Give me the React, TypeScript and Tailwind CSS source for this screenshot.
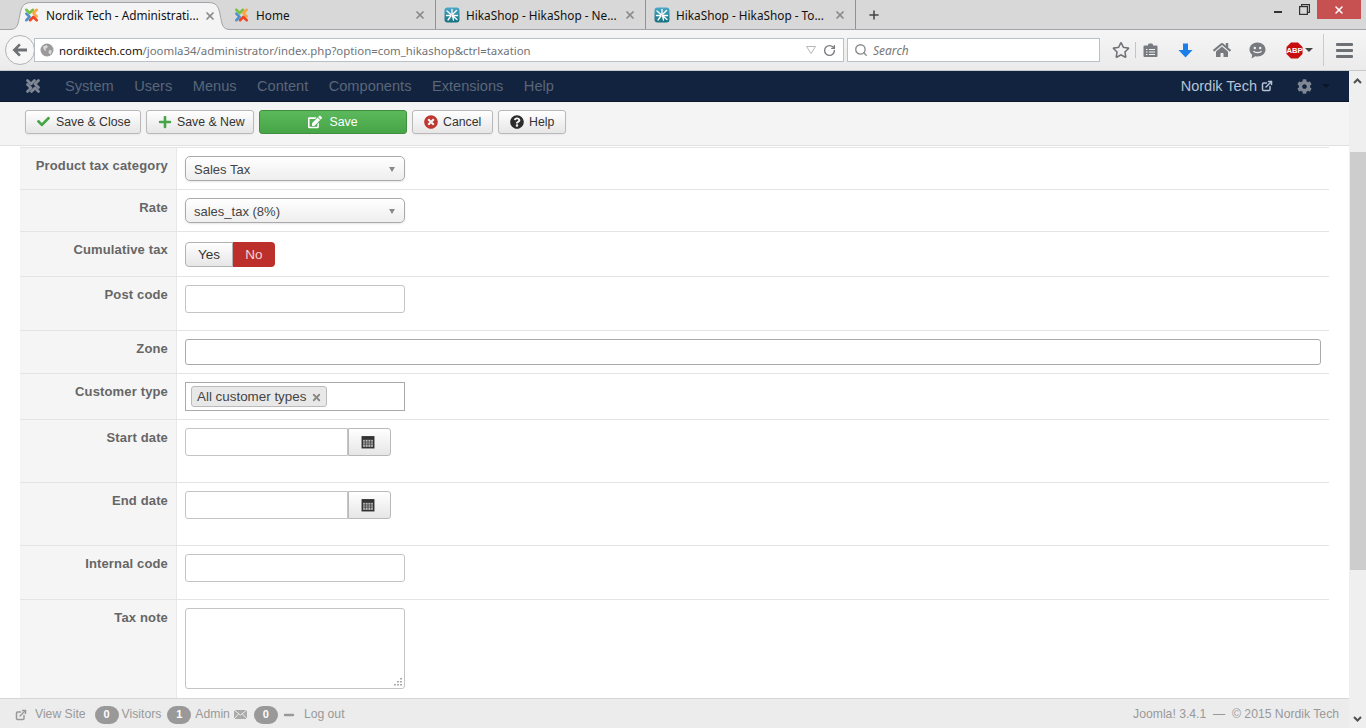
import React from 'react';
import { X, RotateCw, Search, Minus, ExternalLink, Plus } from 'lucide-react';
import { FaCheck, FaPlus, FaTimesCircle, FaQuestionCircle, FaCog, FaHome, FaRegStar, FaEdit } from 'react-icons/fa';

const sans = 'font-["Liberation_Sans",Arial,sans-serif]';

const JoomlaIcon = ({ mono }: { mono?: boolean }) => {
    const c = (color: string) => (mono ? '#7f8794' : color);
    return (
        <svg width="18" height="18" viewBox="0 0 18 18" fill="none" strokeWidth="2.8" strokeLinecap="round" strokeLinejoin="round">
            <path d="M3.500 3.500 7 7l3.500-3.500" stroke={c('#7ac143')} />
            <path d="M14.500 3.500 11 7l3.500 3.500" stroke={c('#f9a541')} />
            <path d="M14.500 14.500 11 11l-3.500 3.500" stroke={c('#f44321')} />
            <path d="M3.500 14.500 7 11 3.500 7.500" stroke={c('#5091cd')} />
        </svg>
    );
};

const HikaIcon = () => (
    <svg width="16" height="16" viewBox="0 0 16 16" className="shrink-0">
        <defs>
            <linearGradient id="hika" x1="0" y1="0" x2="0" y2="1">
                <stop offset="0" stopColor="#4aa8c8" />
                <stop offset="1" stopColor="#14707f" />
            </linearGradient>
        </defs>
        <rect x="0.5" y="0.5" width="15" height="15" rx="3" fill="url(#hika)" />
        <path d="M8 2.500V7M3 4l4 3.500M2.500 8.500H7M8.500 8.500l1 4.500M7 9l-3 4M9 7l3.500-3.500M9.500 8.500h4M9.500 9.500l3.500 3" stroke="#fff" strokeWidth="1.3" strokeLinecap="round" />
    </svg>
);

const tabs = [
    { title: 'Nordik Tech - Administrati...', active: true, icon: 'joomla' },
    { title: 'Home', active: false, icon: 'joomla' },
    { title: 'HikaShop - HikaShop - Ne...', active: false, icon: 'hika' },
    { title: 'HikaShop - HikaShop - To...', active: false, icon: 'hika' },
];

const BrowserTabs = () => (
    <div className="h-[30px] bg-[#d8d8d8] border-b border-[#a0a3a7] flex items-stretch pl-[15px] font-['Noto_Sans',sans-serif] text-[11.8px] text-[#111]">
        {tabs.map((t) => (
            <div
                key={t.title}
                className={
                    t.active
                        ? 'relative w-[211px] h-[30px] flex items-center pl-[8px] pr-[10px] gap-[6px]'
                        : 'w-[210px] h-[29px] border-r border-[#8f9295] flex items-center pl-[7px] pr-[9px] gap-[6px]'
                }
            >
                {t.active && (
                    <svg width="220" height="30" viewBox="0 0 220 30" className="absolute left-[-5px] top-0">
                        <path d="M0 30V29.500C8 29.500 8 24 10 14 11.500 6 14 2.500 22 2.500H198C206 2.500 208.500 6 210 14 212 24 212 29.500 220 29.500V30Z" fill="#f4f4f4" />
                        <path d="M0 29.500C8 29.500 8 24 10 14 11.500 6 14 2.500 22 2.500H198C206 2.500 208.500 6 210 14 212 24 212 29.500 220 29.500" fill="none" stroke="#a0a3a7" />
                    </svg>
                )}
                <span className="relative w-[17px] flex justify-center shrink-0">{t.icon === 'joomla' ? <JoomlaIcon /> : <HikaIcon />}</span>
                <span className="relative flex-1 whitespace-nowrap overflow-hidden pt-[2px]">{t.title}</span>
                <X size={12} strokeWidth={3.5} className="relative mt-[1px] text-[#8a8a8a] shrink-0" />
            </div>
        ))}
        <div className="w-[36px] flex items-center justify-center">
            <Plus size={14} strokeWidth={2.6} className="text-[#444]" />
        </div>
        <div className="flex-1" />
        <div className="flex items-start">
            <div className="w-[26px] h-[20px] flex items-center justify-center pt-[4px]">
                <div className="w-[8px] h-[2px] bg-[#333]" />
            </div>
            <div className="w-[26px] h-[19px] flex items-center justify-center">
                <svg width="11" height="11" viewBox="0 0 11 11" fill="none" stroke="#333" strokeWidth="1.2">
                    <rect x="0.6" y="2.6" width="7.8" height="7.8" />
                    <path d="M2.6 2.6V0.6h7.8v7.8H8.4" />
                </svg>
            </div>
            <div className="w-[44px] h-[19px] mr-[5px] bg-[#c75050] flex items-center justify-center">
                <X size={12} strokeWidth={3} className="text-white" />
            </div>
        </div>
    </div>
);

const BrowserNav = () => (
    <div className="h-[41px] bg-gradient-to-b from-[#f5f5f5] to-[#ebebeb] border-b border-[#c9c9c9] flex items-center pl-[5px] font-['Noto_Sans',sans-serif] text-[11.4px]">
        <div className="w-[30px] h-[30px] rounded-full border border-[#b0b3b6] bg-[#f7f7f7] flex items-center justify-center z-10 shrink-0">
            <svg width="16" height="14" viewBox="0 0 16 14" fill="#6d7074">
                <path d="M7 0.5 8.8 2.3 5.6 5.4H15v3.2H5.6l3.200 3.100L7 13.500 0.500 7z" />
            </svg>
        </div>
        <div className="w-[810px] h-[24px] -ml-[1px] bg-white border border-[#b9c0c8] flex items-center pl-[5px] pr-[6px] text-[#6f7378]">
            <svg width="14" height="14" viewBox="0 0 14 14" className="shrink-0 mr-[5px]">
                <circle cx="7" cy="7" r="6.500" fill="#9b9b9b" />
                <path d="M3 3.500 6.500 2 8 4 5.500 6 6 8 4 7zM9 7l3 .5-1.500 4L8.500 10z" fill="#d9d9d9" />
            </svg>
            <span className="whitespace-nowrap pt-[1px]">
                <span className="text-[#111]">nordiktech.com</span>/joomla34/administrator/index.php?option=com_hikashop&amp;ctrl=taxation
            </span>
            <div className="flex-1" />
            <svg width="10" height="8" viewBox="0 0 10 8" className="mr-[7px]">
                <path d="M0.500 0.500h9L5 7.500z" fill="none" stroke="#b4b8bc" />
            </svg>
            <RotateCw size={13} strokeWidth={2.5} className="text-[#777b80] mr-[1px]" />
        </div>
        <div className="w-[253px] h-[24px] ml-[3px] bg-white border border-[#b9c0c8] flex items-center pl-[6px] text-[#777] italic text-[12px]">
            <Search size={14} strokeWidth={2.4} className="text-[#8a8d90] mr-[5px]" />
            <span className="pt-[1px]">Search</span>
        </div>
        <FaRegStar size={18} className="ml-[12px] text-[#6d7074] shrink-0" />
        <div className="w-px h-[16px] bg-[#c2c5c8] ml-[5px]" />
        <svg width="15" height="15" viewBox="0 0 15 15" className="ml-[7px] shrink-0" fill="#777b80">
            <path d="M1.500 2.500H5V1.500L6 0.500h3l1 1v1h3.500a1 1 0 0 1 1 1v9.500a1 1 0 0 1-1 1h-12a1 1 0 0 1-1-1V3.500a1 1 0 0 1 1-1z" />
            <path d="M3 6h1.500v1H3zM6 6h6v1H6zM3 8.500h1.500v1H3zM6 8.500h6v1H6zM3 11h1.500v1H3zM6 11h6v1H6z" fill="#f2f2f2" />
        </svg>
        <svg width="15" height="15" viewBox="0 0 15 15" className="ml-[20px] shrink-0" fill="#1a7fe8">
            <path d="M5 0.500h5V7h4.500l-7 7.500-7-7.500H5z" />
        </svg>
        <FaHome size={18} className="ml-[20px] text-[#777b80] shrink-0" />
        <svg width="17" height="17" viewBox="0 0 17 17" className="ml-[18px] shrink-0">
            <path d="M8.500 0.500c4.500 0 8 3 8 7s-3.500 7-8 7c-.8 0-1.500-.1-2.200-.3L2.500 16.500l.7-3.700C1.500 11.500.5 9.600.5 7.500c0-4 3.500-7 8-7z" fill="#777b80" />
            <circle cx="5.800" cy="6" r="1.200" fill="#f2f2f2" />
            <circle cx="11.200" cy="6" r="1.200" fill="#f2f2f2" />
            <path d="M4.500 9c1 2.200 7 2.200 8 0" fill="none" stroke="#f2f2f2" strokeWidth="1.200" />
        </svg>
        <svg width="17" height="17" viewBox="0 0 17 17" className="ml-[20px] shrink-0">
            <path d="M5 0.500h7L16.500 5v7L12 16.500H5L0.500 12V5z" fill="#c70d0d" />
            <text x="8.500" y="11.200" textAnchor="middle" fontSize="7.600" fontWeight="700" fill="#fff" fontFamily="Liberation Sans">ABP</text>
        </svg>
        <div className="ml-[2px] w-0 h-0 border-x-[4px] border-x-transparent border-t-[4px] border-t-[#444]" />
        <div className="w-px h-[32px] bg-[#c9cbcd] ml-[10px]" />
        <div className="ml-[12px] flex flex-col gap-[3px]">
            <div className="w-[17px] h-[3px] rounded-[1px] bg-[#6d7074]" />
            <div className="w-[17px] h-[3px] rounded-[1px] bg-[#6d7074]" />
            <div className="w-[17px] h-[3px] rounded-[1px] bg-[#6d7074]" />
        </div>
    </div>
);

const TopNav = () => (
    <div className={`h-[31px] shrink-0 bg-[#12233f] border-b border-[#0b1729] flex items-center pl-[24px] pr-[19px] text-[14.6px] text-[#5b6678] ${sans}`}>
        <JoomlaIcon mono />
        <div className="flex items-center gap-[20.5px] ml-[23px] pt-[1px]">
            {['System', 'Users', 'Menus', 'Content', 'Components', 'Extensions', 'Help'].map((m) => (
                <span key={m}>{m}</span>
            ))}
        </div>
        <div className="flex-1" />
        <span className="text-[14.5px] text-[#b5c3d4] pt-[1px]">Nordik Tech</span>
        <ExternalLink size={12} strokeWidth={3} className="ml-[4px] text-[#b5c3d4]" />
        <FaCog size={15} className="ml-[24px] text-[#7f8794]" />
        <div className="ml-[10px] w-0 h-0 border-x-[4px] border-x-transparent border-t-[4px] border-t-[#0a1526]" />
    </div>
);

const toolBtn = 'h-[24px] rounded-[3px] border border-[#b9b9b9] bg-gradient-to-b from-white to-[#e6e6e6] flex items-center text-[12.3px] text-[#333] shadow-[0_1px_2px_rgba(0,0,0,0.05)]';

const Toolbar = () => (
    <div className={`h-[44px] bg-[#f4f4f4] border-b border-[#e1e1e1] shrink-0 flex items-center pl-[25px] gap-[5px] pb-[4px] ${sans}`}>
        <button className={`${toolBtn} w-[116px] pl-[11px] gap-[6px]`}>
            <FaCheck size={13} className="text-[#46a546]" />
            <span className="pt-[1px]">Save &amp; Close</span>
        </button>
        <button className={`${toolBtn} w-[108px] pl-[11px] gap-[5px]`}>
            <FaPlus size={14} className="text-[#46a546]" />
            <span className="pt-[1px]">Save &amp; New</span>
        </button>
        <button className="h-[24px] w-[148px] rounded-[3px] border border-[#3f8f3f] bg-gradient-to-b from-[#5cb85c] to-[#46a546] flex items-center justify-center gap-[7px] text-[12.3px] text-white">
            <FaEdit size={14} />
            <span className="pt-[1px]">Save</span>
        </button>
        <button className={`${toolBtn} w-[81px] pl-[11px] gap-[5px]`}>
            <FaTimesCircle size={14} className="text-[#bd362f]" />
            <span className="pt-[1px]">Cancel</span>
        </button>
        <button className={`${toolBtn} w-[68px] pl-[11px] gap-[5px]`}>
            <FaQuestionCircle size={14} className="text-[#2b2b2b]" />
            <span className="pt-[1px]">Help</span>
        </button>
    </div>
);

const Row = ({ label, h, children }: { label: string; h: string; children: React.ReactNode }) => (
    <div className={`flex border-b border-[#e4e4e4] ${h}`}>
        <div className="w-[157px] shrink-0 bg-[#f5f5f5] border-r border-[#e8e8e8] pt-[9px] pr-[8px] text-right font-bold text-[#666] text-[13px] tracking-[0.15px] leading-[18px]">{label}</div>
        <div className="flex-1 pt-[8px] pl-[8px] pr-[8px]">{children}</div>
    </div>
);

const Select = ({ value }: { value: string }) => (
    <div className="w-[220px] h-[25px] rounded-[5px] border border-[#aaa] bg-gradient-to-b from-white to-[#eeeeee] shadow-[0_1px_2px_rgba(0,0,0,0.1)] flex items-center justify-between pl-[8px] pr-[9px] text-[#444] text-[13px] pt-[2px]">
        {value}
        <div className="w-0 h-0 border-x-[3.500px] border-x-transparent border-t-[5px] border-t-[#888]" />
    </div>
);

const TextInput = ({ cls }: { cls: string }) => <div className={`h-[28px] rounded-[3px] border border-[#c4c4c4] bg-white ${cls}`} />;

const CalIcon = () => (
    <svg width="14" height="14" viewBox="0 0 13 13">
        <path d="M0.500 1h12V12.500H0.500z" fill="#333" />
        <path d="M2 4.500h9v6.500H2z" fill="#bdbdbd" />
        <path d="M2 6.500h9M2 8.500h9M4 4.500V11M6.500 4.500V11M9 4.500V11" stroke="#444" strokeWidth="0.800" />
    </svg>
);

const DateInput = () => (
    <div className="flex w-[206px] h-[28px]">
        <div className="w-[164px] rounded-l-[3px] border border-[#c4c4c4] bg-white" />
        <div className="w-[43px] rounded-r-[3px] border border-[#b9b9b9] bg-gradient-to-b from-white to-[#e6e6e6] flex items-center justify-center pr-[3px]">
            <CalIcon />
        </div>
    </div>
);

const FormTable = () => (
    <div className="flex-1 min-h-0 overflow-hidden pl-[20px] pr-[20px] bg-white">
        <div className="border-t border-[#e4e4e4] mt-[1px]" />
        <Row label="Product tax category" h="h-[42px]">
            <Select value="Sales Tax" />
        </Row>
        <Row label="Rate" h="h-[42px]">
            <Select value="sales_tax (8%)" />
        </Row>
        <Row label="Cumulative tax" h="h-[45px]">
            <div className="flex h-[25px] mt-[2px] text-[13.5px]">
                <div className="w-[48px] h-[25px] pt-[1px] rounded-l-[4px] border border-[#b3b3b3] bg-gradient-to-b from-white to-[#e6e6e6] flex items-center justify-center text-[#333]">Yes</div>
                <div className="w-[42px] h-[25px] pt-[1px] rounded-r-[4px] bg-[#bd2f2a] flex items-center justify-center text-[#f0d5d4]">No</div>
            </div>
        </Row>
        <Row label="Post code" h="h-[54px]">
            <TextInput cls="w-[220px]" />
        </Row>
        <Row label="Zone" h="h-[43px]">
            <div className="h-[26px] rounded-[3px] border border-[#aaa] bg-white" />
        </Row>
        <Row label="Customer type" h="h-[46px]">
            <div className="w-[220px] h-[29px] border border-[#aaa] bg-white flex items-center pl-[5px]">
                <div className="h-[21px] rounded-[3px] border border-[#bbb] bg-[#e8e8e8] flex items-center pl-[5px] pr-[4px] pt-[1px] gap-[5px] text-[13.4px] text-[#444] whitespace-nowrap">
                    All customer types
                    <X size={11} strokeWidth={4} className="text-[#888]" />
                </div>
            </div>
        </Row>
        <Row label="Start date" h="h-[63px]">
            <DateInput />
        </Row>
        <Row label="End date" h="h-[63px]">
            <DateInput />
        </Row>
        <Row label="Internal code" h="h-[54px]">
            <TextInput cls="w-[220px]" />
        </Row>
        <Row label="Tax note" h="h-[100px]">
            <div className="relative w-[220px] h-[81px] rounded-[3px] border border-[#c4c4c4] bg-white">
                <svg width="8" height="8" viewBox="0 0 8 8" className="absolute right-[2px] bottom-[2px]" fill="#aaa">
                    <path d="M6 0h2v1.500H6zM3 3h2v1.500H3zM6 3h2v1.500H6zM0 6h2v1.500H0zM3 6h2v1.500H3zM6 6h2v1.500H6z" />
                </svg>
            </div>
        </Row>
    </div>
);

const Badge = ({ n }: { n: number }) => (
    <span className="w-[24px] h-[18px] rounded-full bg-[#999] text-white font-bold text-[11px] flex items-center justify-center">{n}</span>
);

const Footer = () => (
    <div className={`h-[30px] shrink-0 bg-[#ececec] border-t border-[#d6d6d6] flex items-center pl-[15px] pr-[10px] pt-[2px] text-[12.2px] text-[#999] ${sans}`}>
        <ExternalLink size={12} strokeWidth={3} className="text-[#999]" />
        <span className="ml-[8px]">View Site</span>
        <span className="ml-[9px]"><Badge n={0} /></span>
        <span className="ml-[3px]">Visitors</span>
        <span className="ml-[6px]"><Badge n={1} /></span>
        <span className="ml-[4px]">Admin</span>
        <svg width="13" height="9" viewBox="0 0 13 9" className="ml-[4px]">
            <rect width="13" height="9" fill="#aaa" />
            <path d="M0 0l6.500 5L13 0M0 9l4.500-5M13 9 8.500 4" stroke="#ececec" fill="none" />
        </svg>
        <span className="ml-[7px]"><Badge n={0} /></span>
        <Minus size={14} strokeWidth={4} className="ml-[4px] text-[#999]" />
        <span className="ml-[8px]">Log out</span>
        <div className="flex-1" />
        <span>Joomla! 3.4.1 &nbsp;— &nbsp;© 2015 Nordik Tech</span>
    </div>
);

const Scrollbar = () => (
    <div className="w-[17px] shrink-0 bg-[#efefef] flex flex-col items-center">
        <svg width="9" height="6" viewBox="0 0 9 6" className="mt-[7px] mb-[68px]" fill="none" stroke="#505050" strokeWidth="2">
            <path d="M1 5l3.500-3.500L8 5" />
        </svg>
        <div className="w-[16px] h-[418px] self-end bg-[#cdcdcd]" />
        <div className="flex-1" />
        <svg width="9" height="6" viewBox="0 0 9 6" className="mb-[6px]" fill="none" stroke="#505050" strokeWidth="2">
            <path d="M1 1l3.500 3.500L8 1" />
        </svg>
    </div>
);

export default function App() {
    return (
        <div className="w-[1366px] h-[728px] overflow-hidden flex flex-col bg-white">
            <BrowserTabs />
            <BrowserNav />
            <div className="flex-1 flex min-h-0">
                <div className="flex-1 flex flex-col min-w-0">
                    <TopNav />
                    <div className={`flex-1 flex flex-col min-h-0 ${sans}`}>
                        <Toolbar />
                        <FormTable />
                        <Footer />
                    </div>
                </div>
                <Scrollbar />
            </div>
        </div>
    );
}
